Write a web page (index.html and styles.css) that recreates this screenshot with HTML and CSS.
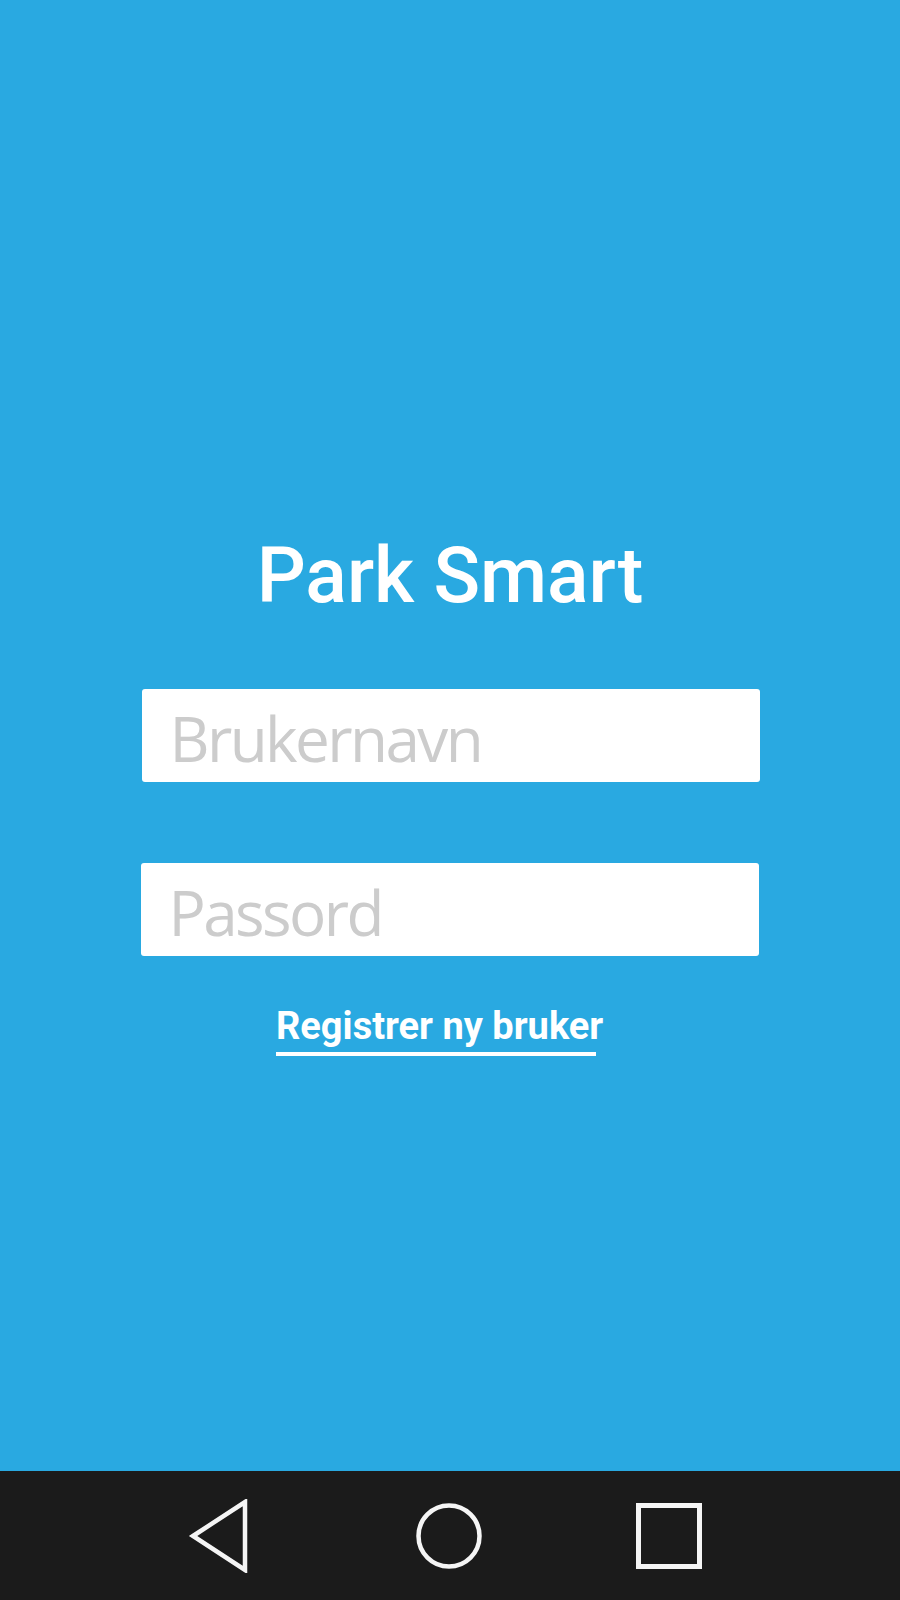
FILE: index.html
```html
<!DOCTYPE html>
<html lang="no">
<head>
<meta charset="utf-8">
<title>Park Smart</title>
<link rel="stylesheet" href="styles.css">
</head>
<body>
<div class="screen">
  <main class="content">
    <h1 class="title">Park Smart</h1>
    <form class="login">
      <input class="field field-user" type="text" placeholder="Brukernavn">
      <input class="field field-pass" type="password" placeholder="Passord">
    </form>
    <a class="register" href="#">Registrer ny bruker</a>
  </main>
  <nav class="navbar">
    <svg class="nav-icon nav-back" width="70" height="74" viewBox="0 0 70 74">
      <polygon points="10,37 62,3 62,71" fill="none" stroke="#f5f5f5" stroke-width="4.5" stroke-linejoin="miter"/>
    </svg>
    <svg class="nav-icon nav-home" width="70" height="70" viewBox="0 0 70 70">
      <circle cx="35" cy="35" r="30.5" fill="none" stroke="#f5f5f5" stroke-width="4.5"/>
    </svg>
    <svg class="nav-icon nav-recent" width="70" height="70" viewBox="0 0 70 70">
      <rect x="4.5" y="4.5" width="61" height="61" fill="none" stroke="#f5f5f5" stroke-width="5"/>
    </svg>
  </nav>
</div>
</body>
</html>
```
FILE: styles.css
```css
html, body {
  margin: 0;
  padding: 0;
}
body {
  background: #29a9e1;
  font-family: Roboto, "Liberation Sans", sans-serif;
}
.screen {
  width: 900px;
  height: 1600px;
  display: flex;
  flex-direction: column;
}
.content {
  flex: 0 0 1471px;
  background: #29a9e1;
  display: flex;
  flex-direction: column;
  align-items: center;
  padding-top: 531px;
  box-sizing: border-box;
}
.title {
  margin: 0;
  font-family: Roboto, "Liberation Sans", sans-serif;
  font-weight: 500;
  font-size: 77px;
  line-height: 90px;
  color: #ffffff;
  letter-spacing: 0;
}
.login {
  margin-top: 68px;
  display: flex;
  flex-direction: column;
  gap: 81px;
  align-items: center;
}
.field {
  display: block;
  width: 618px;
  height: 93px;
  box-sizing: border-box;
  border: none;
  border-radius: 3px;
  background: #ffffff;
  padding: 4px 0 0 28px;
  margin: 0;
  font-family: "Open Sans", "Noto Sans", sans-serif;
  font-size: 62px;
  letter-spacing: -2.6px;
  color: #333;
  outline: none;
}
.field::placeholder {
  color: #cccccc;
  opacity: 1;
}
.field-user {
  margin-left: 1px;
}
.field-pass {
  margin-left: -1px;
}
.register {
  display: block;
  width: 320px;
  margin-top: 49px;
  margin-right: 28px;
  white-space: nowrap;
  font-family: Roboto, "Liberation Sans", sans-serif;
  font-weight: 700;
  font-size: 38px;
  line-height: 42px;
  color: #ffffff;
  text-decoration: none;
  border-bottom: 4px solid #ffffff;
  padding-bottom: 5px;
}
.navbar {
  flex: 0 0 129px;
  background: #1b1b1b;
  display: flex;
  align-items: center;
  padding-left: 183px;
  box-sizing: border-box;
}
.nav-icon {
  display: block;
  flex: none;
}
.nav-home {
  margin-left: 161px;
}
.nav-recent {
  margin-left: 150px;
}
```
